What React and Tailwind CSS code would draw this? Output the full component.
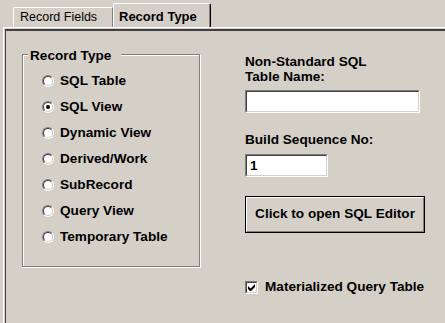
const RECORD_TYPES = [
  "SQL Table",
  "SQL View",
  "Dynamic View",
  "Derived/Work",
  "SubRecord",
  "Query View",
  "Temporary Table",
];

function Radio({ checked }) {
  return (
    <span className="w-3 h-3 shrink-0 rounded-full border border-t-[#808080] border-l-[#808080] border-r-white border-b-white">
      <span className="w-[10px] h-[10px] rounded-full border border-t-[#404040] border-l-[#404040] border-r-[#d4d0c8] border-b-[#d4d0c8] bg-white flex items-center justify-center">
        {checked && <span className="w-1 h-1 rounded-full bg-black" />}
      </span>
    </span>
  );
}

function Sunken({ className, children }) {
  return (
    <div className={`border border-t-[#808080] border-l-[#808080] border-r-white border-b-white ${className}`}>
      <div className="h-full border border-t-[#404040] border-l-[#404040] border-r-[#d4d0c8] border-b-[#d4d0c8] bg-white">
        {children}
      </div>
    </div>
  );
}

export default function App() {
  return (
    <div className="w-[445px] h-[323px] bg-[#d4d0c8] overflow-hidden font-['Liberation_Sans',Arial,sans-serif] text-black">
      {/* tabs */}
      <div className="h-[27px] flex items-end pl-[13px]">
        <div className="w-[100px] h-[20px] rounded-tl-[2px] border-t border-l border-r border-t-white border-l-white border-r-[#808080] pl-[6px] pt-[2px] text-[12.5px] leading-[15px]">
          Record Fields
        </div>
        <div className="w-[98px] h-[24px] rounded-t-[2px] border-t border-l border-r border-t-white border-l-white border-r-black shadow-[inset_-1px_0_0_#808080] pl-[5px] pt-[5px] text-[13px] leading-[15px] font-bold">
          Record Type
        </div>
      </div>

      {/* panel */}
      <div className="ml-[3px] h-[296px] border-t border-l border-white">
        <div className="h-full border-t border-l border-[#d4d0c8]">
          <div className="h-full border-t-2 border-l border-[#404040] flex font-bold text-[13.6px]">
            <div className="relative ml-[16px] mt-[23px] w-[178px] h-[213px] border border-[#808080] shadow-[inset_1px_1px_0_#fff,1px_1px_0_#fff] pt-[13px] pl-[19px]">
              <span className="absolute -top-[7px] left-[5px] bg-[#d4d0c8] pl-[2px] pr-[10px] leading-[16px]">
                Record Type
              </span>
              {RECORD_TYPES.map((t) => (
                <div key={t} className="h-[26px] flex items-center gap-[6px]">
                  <Radio checked={t === "SQL View"} />
                  <span>{t}</span>
                </div>
              ))}
            </div>

            <div className="ml-[45px] mt-[23px] flex flex-col">
              <p className="leading-[15px]">
                Non-Standard SQL
                <br />
                Table Name:
              </p>
              <Sunken className="mt-[6px] w-[175px] h-[23px]" />

              <p className="mt-[19px] leading-[15px]">Build Sequence No:</p>
              <Sunken className="mt-[7px] w-[83px] h-[23px]">
                <span className="block pl-[3px] pt-[2px] font-bold text-black text-[13.5px] leading-[15px]">1</span>
              </Sunken>

              <div className="mt-[19px] w-[180px] h-[37px] border border-black">
                <div className="h-full border border-t-white border-l-white border-r-[#808080] border-b-[#808080] flex items-center justify-center">
                  Click to open SQL Editor
                </div>
              </div>

              <div className="mt-[46px] h-4 flex items-center gap-[7px]">
                <div className="w-[13px] h-[13px] border border-t-[#808080] border-l-[#808080] border-r-white border-b-white">
                  <div className="h-full border border-t-[#404040] border-l-[#404040] border-r-[#d4d0c8] border-b-[#d4d0c8] bg-white flex items-center justify-center">
                    <svg width="7" height="7" viewBox="0 0 7 7">
                      <path d="M0 2v3l2 2h1l4-4V0L2.5 4.5z" fill="#000" />
                    </svg>
                  </div>
                </div>
                <span>Materialized Query Table</span>
              </div>
            </div>
          </div>
        </div>
      </div>
    </div>
  );
}
